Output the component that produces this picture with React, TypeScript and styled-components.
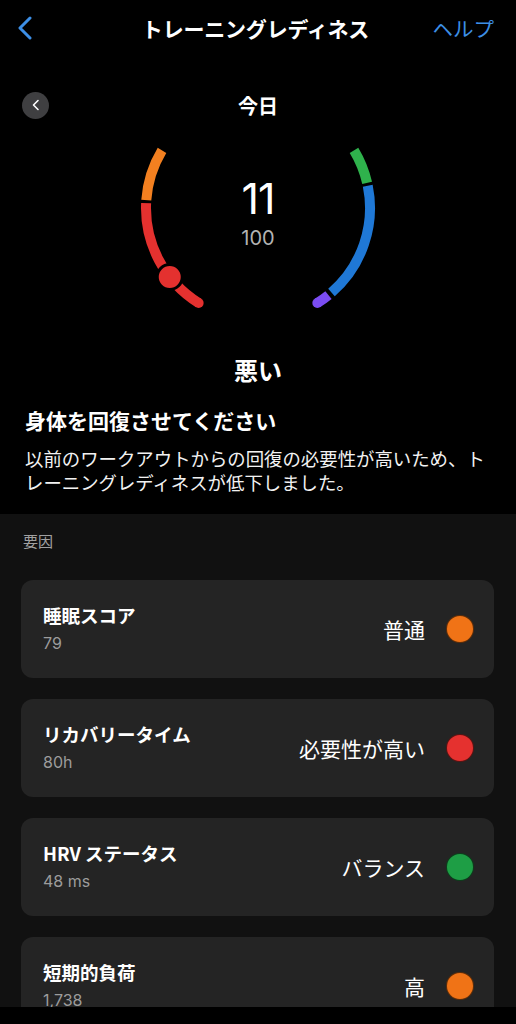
import React from 'react';
import styled, { createGlobalStyle } from 'styled-components';

const GlobalStyle = createGlobalStyle`
  html, body {
    margin: 0;
    padding: 0;
    background: #000;
  }
  body {
    font-family: "Noto Sans CJK JP", "Noto Sans", sans-serif;
    color: #fff;
  }
`;

const Screen = styled.div`
  width: 516px;
  height: 1024px;
  overflow: hidden;
  background: #000;
  display: flex;
  flex-direction: column;
`;

const Scroll = styled.div`
  height: 1007px;
  overflow: hidden;
  flex-shrink: 0;
`;

const BottomBar = styled.div`
  flex: 1;
  background: #000;
`;

const NavBar = styled.div`
  height: 56px;
  display: grid;
  grid-template-columns: 1fr auto 1fr;
  align-items: center;
  padding: 0 22px 0 17px;
`;

const NavBack = styled.div`
  display: flex;
  align-items: center;
`;

const NavTitle = styled.div`
  font-size: 21px;
  font-weight: 700;
  letter-spacing: -0.2px;
`;

const NavAction = styled.div`
  justify-self: end;
  font-size: 20.5px;
  color: #3d8fe6;
`;

const DayRow = styled.div`
  margin-top: 30px;
  height: 38px;
  display: grid;
  grid-template-columns: 1fr auto 1fr;
  align-items: center;
  padding: 0 22px;
`;

const RoundButton = styled.div`
  width: 27px;
  height: 27px;
  border-radius: 50%;
  background: #3f3f41;
  display: flex;
  align-items: center;
  justify-content: center;
`;

const DayLabel = styled.div`
  font-size: 20px;
  font-weight: 700;
`;

const GaugeWrap = styled.div`
  position: relative;
  width: 260px;
  height: 200px;
  margin: 0 auto;
`;

const GaugeCenter = styled.div`
  position: absolute;
  left: 0;
  right: 0;
  top: 50px;
  display: flex;
  flex-direction: column;
  align-items: center;
`;

const Score = styled.div`
  font-family: Inter, "Noto Sans", sans-serif;
  font-size: 43px;
  font-weight: 400;
  line-height: 48px;
  letter-spacing: -1px;
`;

const ScoreMax = styled.div`
  font-family: Inter, "Noto Sans", sans-serif;
  font-size: 20px;
  line-height: 26px;
  color: #b3b3b3;
  margin-top: 3px;
`;

const Status = styled.div`
  margin-top: 29px;
  text-align: center;
  font-size: 24px;
  font-weight: 700;
  line-height: 34px;
`;

const Summary = styled.div`
  padding: 0 25px 20px 25px;
`;

const Heading = styled.div`
  margin-top: 18px;
  font-size: 21px;
  font-weight: 700;
  line-height: 30px;
`;

const Paragraph = styled.p`
  margin: 11px 0 0 0;
  font-size: 18.4px;
  line-height: 24px;
  color: #f2f2f2;
`;

const Factors = styled.div`
  background: #111111;
  padding: 17px 22px 0 21px;
  min-height: 600px;
`;

const SectionLabel = styled.div`
  font-size: 15px;
  line-height: 20px;
  color: #a0a0a0;
  padding-left: 2px;
`;

const CardList = styled.div`
  margin-top: 29px;
  display: flex;
  flex-direction: column;
  gap: 21px;
`;

const Card = styled.div`
  height: 98px;
  box-sizing: border-box;
  background: #242424;
  border-radius: 12px;
  padding: 23px 20px 0 22px;
  display: flex;
  justify-content: space-between;
`;

const CardText = styled.div`
  display: flex;
  flex-direction: column;
`;

const CardTitle = styled.div`
  font-size: 18.5px;
  font-weight: 700;
  line-height: 24px;
`;

const CardValue = styled.div`
  margin-top: 5px;
  font-family: Inter, "Noto Sans", sans-serif;
  font-size: 16px;
  line-height: 22px;
  color: #9c9c9c;
`;

const CardRight = styled.div`
  display: flex;
  align-items: center;
  gap: 21px;
  height: 51px;
`;

const CardStatus = styled.div`
  font-size: 21px;
  line-height: 28px;
`;

const StatusDot = styled.div<{ $color: string }>`
  width: 28px;
  height: 28px;
  box-sizing: border-box;
  border-radius: 50%;
  background: ${(p) => p.$color};
  border: 1px solid rgba(0, 0, 0, 0.6);
`;

const CX = 130;
const CY = 84;
const R = 112;

const pt = (deg: number, r = R) => {
  const a = (deg * Math.PI) / 180;
  return [CX + r * Math.sin(a), CY - r * Math.cos(a)];
};

const arc = (from: number, to: number) => {
  const [x1, y1] = pt(from);
  const [x2, y2] = pt(to);
  const large = to - from > 180 ? 1 : 0;
  return `M ${x1.toFixed(2)} ${y1.toFixed(2)} A ${R} ${R} 0 ${large} 1 ${x2.toFixed(2)} ${y2.toFixed(2)}`;
};

const segments = [
  { from: -148, to: -87.5, color: '#e4312f' },
  { from: -86, to: -59, color: '#f38020' },
  { from: 59, to: 77, color: '#2fb24c' },
  { from: 78.5, to: 139, color: '#1f78d6' },
  { from: 141, to: 148, color: '#7b4cf2' },
];

const Gauge: React.FC = () => {
  const [rx, ry] = pt(-148);
  const [px, py] = pt(148);
  const [dx, dy] = pt(-128);
  return (
    <svg width="260" height="200" viewBox="0 0 260 200">
      {segments.map((s) => (
        <path key={s.from} d={arc(s.from, s.to)} stroke={s.color} strokeWidth={10} fill="none" />
      ))}
      <circle cx={rx} cy={ry} r={5} fill="#e4312f" />
      <circle cx={px} cy={py} r={5} fill="#7b4cf2" />
      <circle cx={dx} cy={dy} r={12.5} fill="#e4312f" stroke="#000" strokeWidth={3} />
    </svg>
  );
};

const factors = [
  { title: '睡眠スコア', value: '79', status: '普通', color: '#f07316' },
  { title: 'リカバリータイム', value: '80h', status: '必要性が高い', color: '#e5312f' },
  { title: 'HRV ステータス', value: '48 ms', status: 'バランス', color: '#1e9e45' },
  { title: '短期的負荷', value: '1,738', status: '高', color: '#f07316' },
];

const App: React.FC = () => (
  <>
    <GlobalStyle />
    <Screen>
      <Scroll>
        <NavBar>
          <NavBack>
            <svg width="16" height="24" viewBox="0 0 16 24">
              <path d="M13 2 L3 12 L13 22" stroke="#3d8fe6" strokeWidth="3" fill="none" strokeLinecap="round" strokeLinejoin="round" />
            </svg>
          </NavBack>
          <NavTitle>トレーニングレディネス</NavTitle>
          <NavAction>ヘルプ</NavAction>
        </NavBar>

        <DayRow>
          <RoundButton>
            <svg width="10" height="12" viewBox="0 0 10 12">
              <path d="M7 1.5 L2.5 6 L7 10.5" stroke="#fff" strokeWidth="1.6" fill="none" strokeLinecap="round" strokeLinejoin="round" />
            </svg>
          </RoundButton>
          <DayLabel>今日</DayLabel>
          <div />
        </DayRow>

        <GaugeWrap>
          <Gauge />
          <GaugeCenter>
            <Score>11</Score>
            <ScoreMax>100</ScoreMax>
          </GaugeCenter>
        </GaugeWrap>

        <Status>悪い</Status>

        <Summary>
          <Heading>身体を回復させてください</Heading>
          <Paragraph>
            以前のワークアウトからの回復の必要性が高いため、トレーニングレディネスが低下しました。
          </Paragraph>
        </Summary>

        <Factors>
          <SectionLabel>要因</SectionLabel>
          <CardList>
            {factors.map((f) => (
              <Card key={f.title}>
                <CardText>
                  <CardTitle>{f.title}</CardTitle>
                  <CardValue>{f.value}</CardValue>
                </CardText>
                <CardRight>
                  <CardStatus>{f.status}</CardStatus>
                  <StatusDot $color={f.color} />
                </CardRight>
              </Card>
            ))}
          </CardList>
        </Factors>
      </Scroll>
      <BottomBar />
    </Screen>
  </>
);

export default App;
